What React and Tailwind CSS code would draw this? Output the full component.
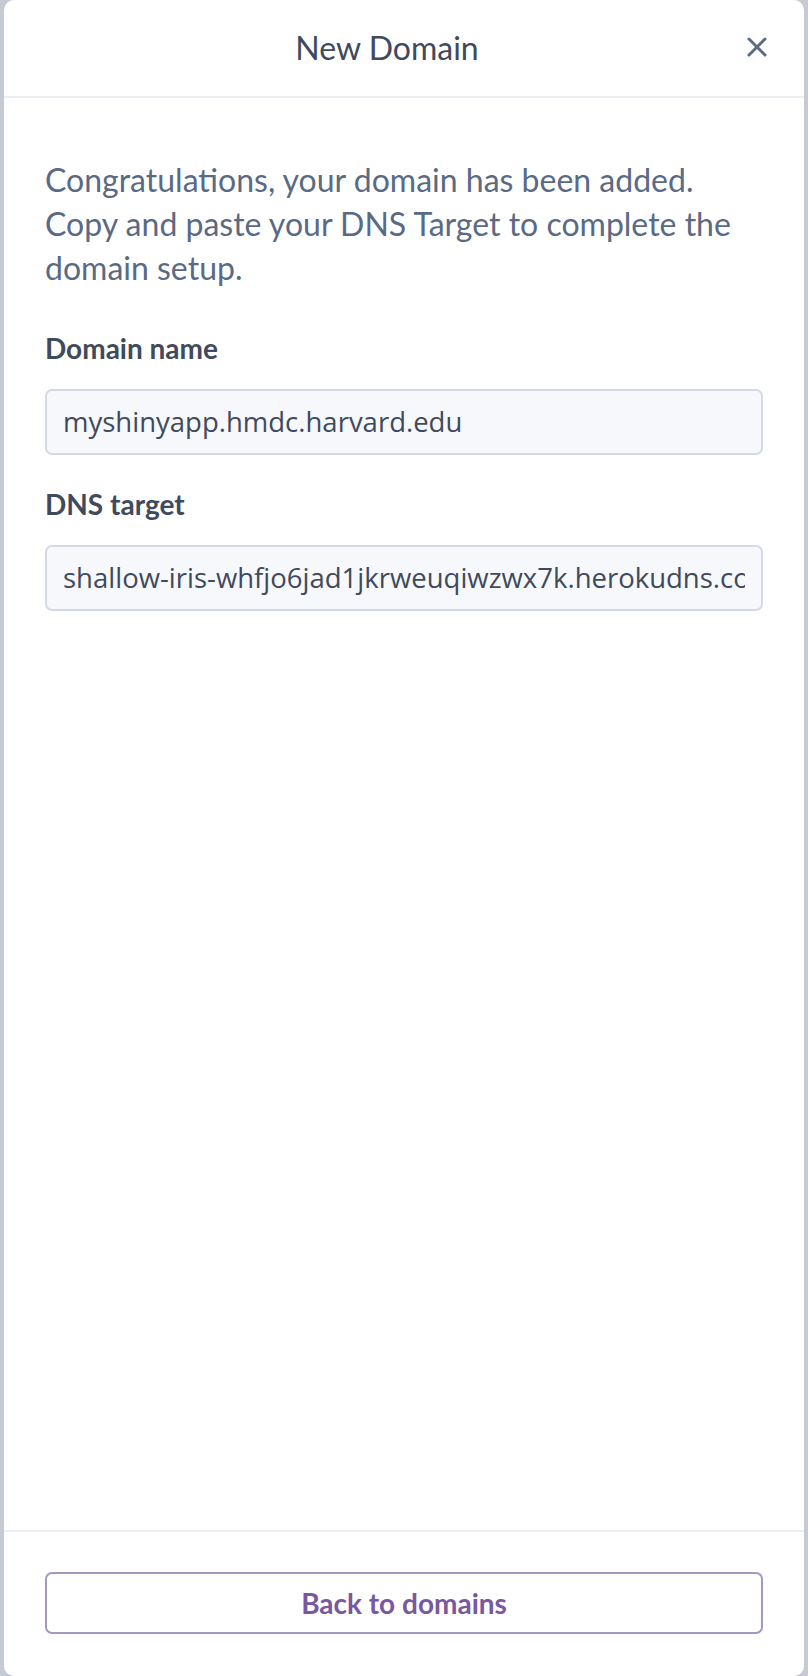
import React from "react";

function CloseIcon() {
  return (
    <svg width="22" height="22" viewBox="0 0 22 22" fill="none">
      <path d="M3 3 L19 19 M19 3 L3 19" stroke="#5b6a85" strokeWidth="3" strokeLinecap="round" />
    </svg>
  );
}

export default function App() {
  const heading = { fontFamily: "Lato, 'Open Sans', sans-serif" };
  const mono = { fontFamily: "'Open Sans', 'Noto Sans', sans-serif" };
  return (
    <div className="w-[808px] h-[1676px] bg-[#c6cad3] px-[4px] flex" style={heading}>
      <div className="flex-1 bg-white rounded-[10px] flex flex-col overflow-hidden">
        <div className="h-[98px] border-b-2 border-[#eceef3] flex items-center justify-center relative shrink-0 pr-[34px]">
          <div className="text-[32px] text-[#3f4a5c]">New Domain</div>
          <button className="absolute right-[36px] top-[36px]">
            <CloseIcon />
          </button>
        </div>
        <div className="flex-1 px-[41px] pt-[60px]">
          <p className="text-[32px] leading-[44px] text-[#5a6a84]">
            Congratulations, your domain has been added. Copy and paste your DNS Target to complete the domain setup.
          </p>
          <div className="mt-[40px] text-[28px] leading-[36px] font-bold text-[#3f4a5c]">Domain name</div>
          <div className="mt-[23px] h-[66px] rounded-[7px] border-2 border-[#d3d9e6] bg-[#f7f8fb] flex items-center px-[16px]">
            <div className="flex-1 overflow-hidden whitespace-nowrap">
              <span className="text-[27.5px] text-[#3f4a5c]" style={mono}>myshinyapp.hmdc.harvard.edu</span>
            </div>
          </div>
          <div className="mt-[31px] text-[28px] leading-[36px] font-bold text-[#3f4a5c]">DNS target</div>
          <div className="mt-[23px] h-[66px] rounded-[7px] border-2 border-[#d3d9e6] bg-[#f7f8fb] flex items-center px-[16px]">
            <div className="flex-1 overflow-hidden whitespace-nowrap">
              <span className="text-[27.5px] text-[#3f4a5c]" style={mono}>shallow-iris-whfjo6jad1jkrweuqiwzwx7k.herokudns.com</span>
            </div>
          </div>
        </div>
        <div className="border-t-2 border-[#eceef3] px-[41px] pt-[40px] pb-[42px] shrink-0">
          <button className="w-full h-[62px] rounded-[7px] border-2 border-[#a596c0] bg-white text-[28px] font-bold text-[#79589f] flex items-center justify-center">
            Back to domains
          </button>
        </div>
      </div>
    </div>
  );
}
